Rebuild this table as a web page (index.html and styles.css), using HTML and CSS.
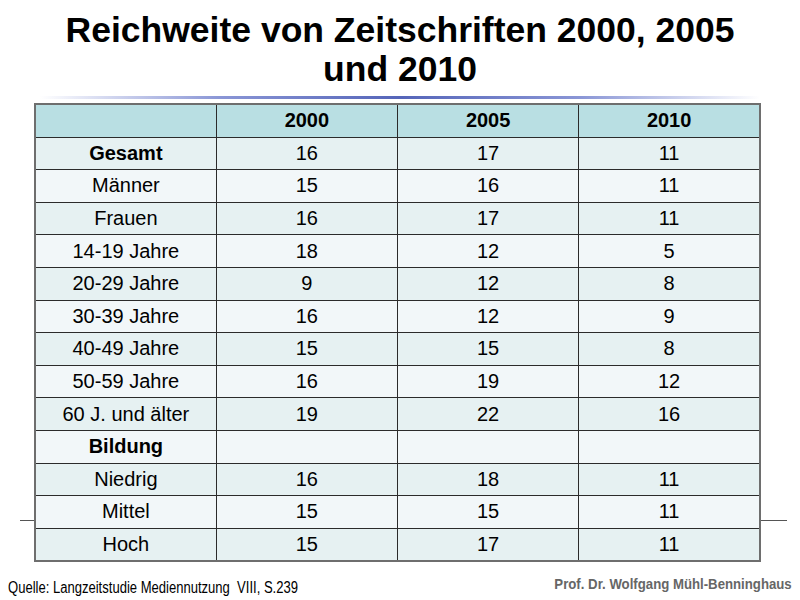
FILE: index.html
```html
<!DOCTYPE html>
<html lang="de">
<head>
<meta charset="utf-8">
<title>Reichweite von Zeitschriften</title>
<link rel="stylesheet" href="styles.css">
</head>
<body>
<div class="slide">
  <h1 class="title">Reichweite von Zeitschriften 2000, 2005<br>und 2010</h1>
  <div class="rule"></div>
  <div class="footline"></div>
  <table class="data">
    <thead>
      <tr><th></th><th>2000</th><th>2005</th><th>2010</th></tr>
    </thead>
    <tbody>
      <tr><td class="b">Gesamt</td><td>16</td><td>17</td><td>11</td></tr>
      <tr><td>Männer</td><td>15</td><td>16</td><td>11</td></tr>
      <tr><td>Frauen</td><td>16</td><td>17</td><td>11</td></tr>
      <tr><td>14-19 Jahre</td><td>18</td><td>12</td><td>5</td></tr>
      <tr><td>20-29 Jahre</td><td>9</td><td>12</td><td>8</td></tr>
      <tr><td>30-39 Jahre</td><td>16</td><td>12</td><td>9</td></tr>
      <tr><td>40-49 Jahre</td><td>15</td><td>15</td><td>8</td></tr>
      <tr><td>50-59 Jahre</td><td>16</td><td>19</td><td>12</td></tr>
      <tr><td>60 J. und älter</td><td>19</td><td>22</td><td>16</td></tr>
      <tr><td class="b">Bildung</td><td></td><td></td><td></td></tr>
      <tr><td>Niedrig</td><td>16</td><td>18</td><td>11</td></tr>
      <tr><td>Mittel</td><td>15</td><td>15</td><td>11</td></tr>
      <tr><td>Hoch</td><td>15</td><td>17</td><td>11</td></tr>
    </tbody>
  </table>
  <div class="footer">
    <span class="source">Quelle: Langzeitstudie Mediennutzung&nbsp; VIII, S.239</span>
    <span class="author">Prof. Dr. Wolfgang Mühl-Benninghaus</span>
  </div>
</div>
</body>
</html>
```

FILE: styles.css
```css
html, body {
  margin: 0;
  padding: 0;
  background: #ffffff;
}

.slide {
  position: relative;
  width: 800px;
  height: 600px;
  overflow: hidden;
  font-family: "Liberation Sans", Arial, sans-serif;
  color: #000;
}

.title {
  margin: 0;
  padding-top: 11px;
  font-size: 35.5px;
  line-height: 39px;
  font-weight: bold;
  text-align: center;
}

.rule {
  margin: 7px 40px 0 40px;
  height: 3px;
  background: linear-gradient(to right, rgba(91,107,191,0) 0%, #8a96d6 25%, #5565b9 50%, #8a96d6 75%, rgba(91,107,191,0) 100%);
}

.footline {
  position: absolute;
  left: 20px;
  top: 520px;
  width: 767px;
  height: 1px;
  background: #555;
}

.data {
  position: relative;
  margin: 4px 0 0 34px;
  width: 727px;
  border-collapse: collapse;
  table-layout: fixed;
  font-size: 20px;
}

.data th,
.data td {
  height: 31.6px;
  padding: 0;
  text-align: center;
  vertical-align: middle;
  border: 1px solid #2b2b2b;
}

.data th {
  background: #b9dfe3;
  font-weight: bold;
}

.data tr > :first-child {
  border-left: 2px solid #6e6e6e;
}

.data tr > :last-child {
  border-right: 2px solid #6e6e6e;
}

.data tbody tr:nth-child(odd) td {
  background: #e6f1f2;
}

.data tbody tr:nth-child(even) td {
  background: #f2f7f9;
}

.data tbody tr:last-child td {
  border-bottom: 2px solid #6e6e6e;
}

.data thead th {
  border-top: 2px solid #6e6e6e;
}

.data td.b {
  font-weight: bold;
}

.footer {
  position: absolute;
  left: 8px;
  right: 8px;
  bottom: 3px;
  display: flex;
  justify-content: space-between;
  align-items: flex-end;
}

.source {
  display: inline-block;
  font-size: 16px;
  line-height: 18px;
  color: #000;
  transform: scaleX(0.815);
  transform-origin: left center;
  white-space: nowrap;
}

.author {
  display: inline-block;
  font-size: 15px;
  line-height: 18px;
  font-weight: bold;
  color: #666;
  margin-bottom: 4px;
  transform: scaleX(0.88);
  transform-origin: right center;
  white-space: nowrap;
}
```
